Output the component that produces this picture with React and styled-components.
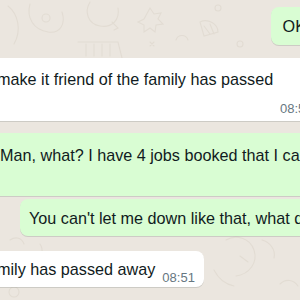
import styled, { createGlobalStyle } from "styled-components";

const GlobalStyle = createGlobalStyle`
  html, body {
    margin: 0;
    padding: 0;
  }
  body {
    font-family: "Liberation Sans", Arial, sans-serif;
    background: #ebe6df;
  }
`;

const Chat = styled.div`
  position: relative;
  width: 300px;
  height: 300px;
  overflow: hidden;
  background: #ebe6df;
  display: flex;
  flex-direction: column;
  padding-top: 7px;
  box-sizing: border-box;
`;

const Doodles = styled.svg`
  position: absolute;
  inset: 0;
  width: 300px;
  height: 300px;
  pointer-events: none;
`;

const Row = styled.div`
  position: relative;
  display: flex;
  justify-content: ${(p) => (p.$out ? "flex-end" : "flex-start")};
  margin-top: ${(p) => p.$gap || 0}px;
`;

const Bubble = styled.div`
  flex: 0 0 auto;
  box-sizing: border-box;
  height: ${(p) => p.$h}px;
  width: ${(p) => (p.$w ? `${p.$w}px` : "auto")};
  background: ${(p) => (p.$out ? "#d9fdd3" : "#ffffff")};
  border-radius: 8px;
  box-shadow: 0 1px 0.5px rgba(11, 20, 26, 0.13);
  color: #111b21;
  font-size: 16.2px;
  line-height: 22px;
  white-space: nowrap;
  padding: ${(p) => p.$pad || "6px 8px"};
  margin-left: ${(p) => p.$ml || 0}px;
  margin-right: ${(p) => p.$mr || 0}px;
`;

const Line = styled.div`
  display: flex;
  align-items: baseline;
  gap: 7px;
`;

const Meta = styled.div`
  color: #667781;
  font-size: 13px;
  line-height: 15px;
  padding-left: ${(p) => p.$left || 0}px;
  margin-top: ${(p) => p.$mt || 0}px;
`;

const Time = styled.span`
  color: #667781;
  font-size: 13px;
  position: relative;
  top: 7px;
`;

export default function App() {
  return (
    <>
      <GlobalStyle />
      <Chat>
        <Doodles viewBox="0 0 300 300" fill="none" stroke="#e2dcd3" strokeWidth="1.1" strokeLinecap="round">
          <path d="M8 6 C18 14 22 30 14 44" />
          <path d="M30 4 C26 18 34 30 48 32 C60 34 66 24 62 12" />
          <circle cx="46" cy="18" r="4" />
          <path d="M90 2 C84 12 88 24 100 26 C112 28 120 20 118 8" />
          <path d="M112 22 l6 6 l-4 2" />
          <path d="M78 42 h40 l4 16 M86 44 v12 M94 44 v12 M102 44 v12 M110 44 v12" />
          <path d="M150 8 l4 6 l7 -1 l-3 6 l5 5 l-7 1 l-1 7 l-5 -4 l-6 4 l0 -7 l-6 -3 l6 -3 z" />
          <circle cx="218" cy="8" r="3" />
          <path d="M200 22 c8 -4 18 2 18 10 l-14 4 z M204 26 l6 8 M210 24 l4 10" />
          <circle cx="240" cy="44" r="3" />
          <path d="M176 40 c2 -6 10 -6 12 0 M150 42 l4 4 m0 -4 l-4 4" />
          <path d="M230 110 c6 6 14 6 20 0" />
          <path d="M10 240 c6 -4 12 -2 14 4 M40 244 c4 6 2 12 -4 14" />
          <circle cx="14" cy="292" r="5" />
          <path d="M226 240 c10 -6 24 -2 28 10 c4 12 -4 24 -18 26 M240 256 l8 6" />
          <path d="M262 240 c8 2 14 10 12 18 M214 270 c4 8 10 14 20 16 M280 284 c6 -6 14 -4 18 2" />
        </Doodles>
        <Row $out>
          <Bubble $out $h={38} $mr={-18} $pad="8px 12px">
            OK
          </Bubble>
        </Row>
        <Row $gap={13}>
          <Bubble $h={63} $ml={-12} $w={340} $pad="10px 9px">
            <div>make it friend of the family has passed</div>
            <Meta $mt={11} $left={283}>08:51</Meta>
          </Bubble>
        </Row>
        <Row $gap={12}>
          <Bubble $out $h={63} $ml={-9} $pad="11px 9px">
            <div>Man, what? I have 4 jobs booked that I can't do alone</div>
          </Bubble>
        </Row>
        <Row $out $gap={3}>
          <Bubble $out $h={37} $mr={-60} $w={340} $pad="8px 9px">
            You can't let me down like that, what do I do
          </Bubble>
        </Row>
        <Row $gap={15}>
          <Bubble $h={36} $ml={-12} $pad="7px 9px">
            <Line>
              <span>mily has passed away</span>
              <Time>08:51</Time>
            </Line>
          </Bubble>
        </Row>
      </Chat>
    </>
  );
}
